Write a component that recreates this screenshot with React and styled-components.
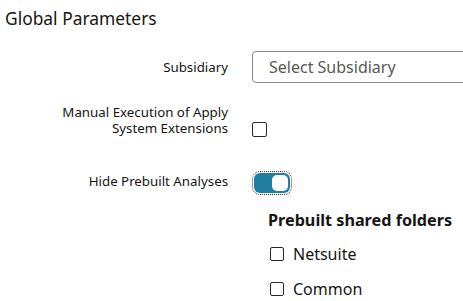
import React from "react";
import styled, { createGlobalStyle } from "styled-components";

const Global = createGlobalStyle`
  html, body { margin: 0; padding: 0; background: #fff; }
  body { font-family: "Noto Sans", "Open Sans", sans-serif; color: #161513; }
`;

const Page = styled.div`
  width: 463px;
  height: 301px;
  overflow: hidden;
`;

const Title = styled.h1`
  margin: 0;
  padding: 6px 0 0 5px;
  font-size: 17.4px;
  font-weight: 400;
  line-height: 24px;
  color: #161513;
`;

const Row = styled.div`
  display: flex;
  align-items: ${(p) => p.$align || "center"};
  gap: 24px;
  margin-top: ${(p) => p.$mt}px;
`;

const Label = styled.div`
  width: 228px;
  flex: none;
  text-align: right;
  font-size: 13.3px;
  line-height: 16px;
  color: #161513;
  margin-top: ${(p) => p.$mt || 0}px;
`;

const SelectBox = styled.div`
  box-sizing: border-box;
  width: 260px;
  height: 32px;
  flex: none;
  border: 1px solid #8c8984;
  border-radius: 4px;
  display: flex;
  align-items: center;
  padding-left: 16px;
  font-size: 16px;
  color: #5a5855;
  white-space: nowrap;
`;

const Box = styled.span`
  box-sizing: border-box;
  display: inline-block;
  width: ${(p) => p.$s || 15}px;
  height: ${(p) => p.$s || 15}px;
  border: 1.5px solid #2b2927;
  border-radius: 2px;
  background: #fff;
  flex: none;
  margin-bottom: ${(p) => p.$mb || 0}px;
`;

const ToggleRing = styled.span`
  display: inline-flex;
  padding: 1px;
  border: 1px dotted #3a3a3a;
  border-radius: 8px;
  flex: none;
`;

const Track = styled.span`
  box-sizing: border-box;
  width: 36px;
  height: 20px;
  border-radius: 6px;
  background: #227e9e;
  display: flex;
  align-items: center;
  justify-content: flex-end;
  padding-right: 2px;
`;

const Thumb = styled.span`
  width: 16px;
  height: 16px;
  border-radius: 5px;
  background: #fff;
`;

const Folders = styled.div`
  padding-left: 268px;
  margin-top: 14px;
`;

const FolderTitle = styled.div`
  font-size: 16.2px;
  font-weight: 700;
  line-height: 22px;
  color: #161513;
`;

const Option = styled.label`
  display: flex;
  align-items: center;
  gap: 9px;
  margin-left: 2px;
  margin-top: ${(p) => p.$mt}px;
  font-size: 16px;
  line-height: 22px;
  color: #161513;
`;

export default function App() {
  return (
    <Page>
      <Global />
      <Title>Global Parameters</Title>
      <Row $mt={21}>
        <Label>Subsidiary</Label>
        <SelectBox>Select Subsidiary</SelectBox>
      </Row>
      <Row $mt={21} $align="flex-end">
        <Label>
          Manual Execution of Apply
          <br />
          System Extensions
        </Label>
        <Box $mb={-1} />
      </Row>
      <Row $mt={35} $align="flex-start">
        <Label $mt={2}>Hide Prebuilt Analyses</Label>
        <ToggleRing>
          <Track>
            <Thumb />
          </Track>
        </ToggleRing>
      </Row>
      <Folders>
        <FolderTitle>Prebuilt shared folders</FolderTitle>
        <Option $mt={12}>
          <Box $s={14} />
          Netsuite
        </Option>
        <Option $mt={13}>
          <Box $s={14} />
          Common
        </Option>
      </Folders>
    </Page>
  );
}
